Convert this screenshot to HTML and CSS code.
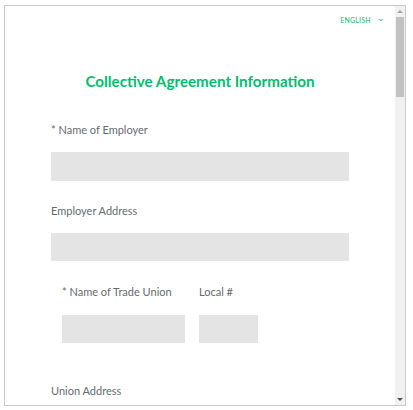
FILE: index.html
```html
<!DOCTYPE html>
<html lang="en">
<head>
  <meta charset="UTF-8" />
  <meta name="viewport" content="width=device-width, initial-scale=1.0"/>
  <title>Collective Agreement Information</title>
  <link rel="stylesheet" href="styles.css">
</head>
<body>
  <div class="frame">
    <div class="page">
      <div class="lang">ENGLISH <span class="chev">&#8964;</span></div>

      <h1 class="title">Collective Agreement Information</h1>

      <div class="field">
        <label>* Name of Employer</label>
        <div class="input"></div>
      </div>

      <div class="field">
        <label>Employer Address</label>
        <div class="input"></div>
      </div>

      <!-- union name + local number side by side -->
      <div class="field-row">
        <div class="field">
          <label>* Name of Trade Union</label>
          <div class="input union"></div>
        </div>
        <div class="field">
          <label>Local #</label>
          <div class="input local"></div>
        </div>
      </div>

      <div class="field">
        <label>Union Address</label>
        <div class="input"></div>
      </div>
    </div>

    <div class="scrollbar">
      <div class="sb-btn up"></div>
      <div class="sb-track">
        <div class="sb-thumb"></div>
      </div>
      <div class="sb-btn down"></div>
    </div>
  </div>
</body>
</html>
```

FILE: styles.css
```css
* {
  margin: 0;
  padding: 0;
  box-sizing: border-box;
}

body {
  background: #fff;
  font-family: Lato, sans-serif;
  color: #666b70;
}

.frame {
  display: flex;
  width: 402px;
  height: 401px;
  margin: 5px 0 0 4px;
  border: 1px solid #c9c9c9;
  overflow: hidden;
}

.page {
  flex: 1;
  overflow: hidden;
  padding: 8px 46px 0;
}

.lang {
  text-align: right;
  margin-right: -36px;
  font-size: 7px;
  letter-spacing: 0.2px;
  color: #00bf6f;
  line-height: 12px;
}

.chev {
  display: inline-block;
  margin-left: 4px;
  font-size: 9px;
  transform: translateY(-2px);
}

.title {
  margin-top: 44px;
  text-align: center;
  font-size: 15.2px;
  font-weight: 700;
  color: #00bf6f;
  line-height: 22px;
}

.field {
  display: flex;
  flex-direction: column;
}

.field label {
  font-size: 11px;
  line-height: 14px;
  margin-bottom: 15px;
}

.title + .field {
  margin-top: 31px;
}

.field + .field {
  margin-top: 23px;
}

.field-row + .field {
  margin-top: 41px;
}

.input {
  height: 29px;
  background: #e4e4e4;
}

.field + .field .input,
.field-row .input {
  height: 28px;
}

.field-row {
  display: flex;
  gap: 14px;
  margin-top: 24px;
  padding-left: 11px;
}

.field-row .field {
  margin-top: 0;
}

.field-row label {
  margin-bottom: 16px;
}

.input.union {
  width: 123px;
}

.input.local {
  width: 59px;
}

.scrollbar {
  width: 10px;
  display: flex;
  flex-direction: column;
  background: #f1f1f1;
}

.sb-btn {
  height: 11px;
  display: flex;
  align-items: center;
  justify-content: center;
}

.sb-btn::after {
  content: "";
  border-left: 3px solid transparent;
  border-right: 3px solid transparent;
}

.sb-btn.up::after {
  border-bottom: 3px solid #a3a3a3;
}

.sb-btn.down::after {
  border-top: 3px solid #505050;
}

.sb-track {
  flex: 1;
}

.sb-thumb {
  height: 80px;
  margin: 0 1px;
  background: #c1c1c1;
}
```
